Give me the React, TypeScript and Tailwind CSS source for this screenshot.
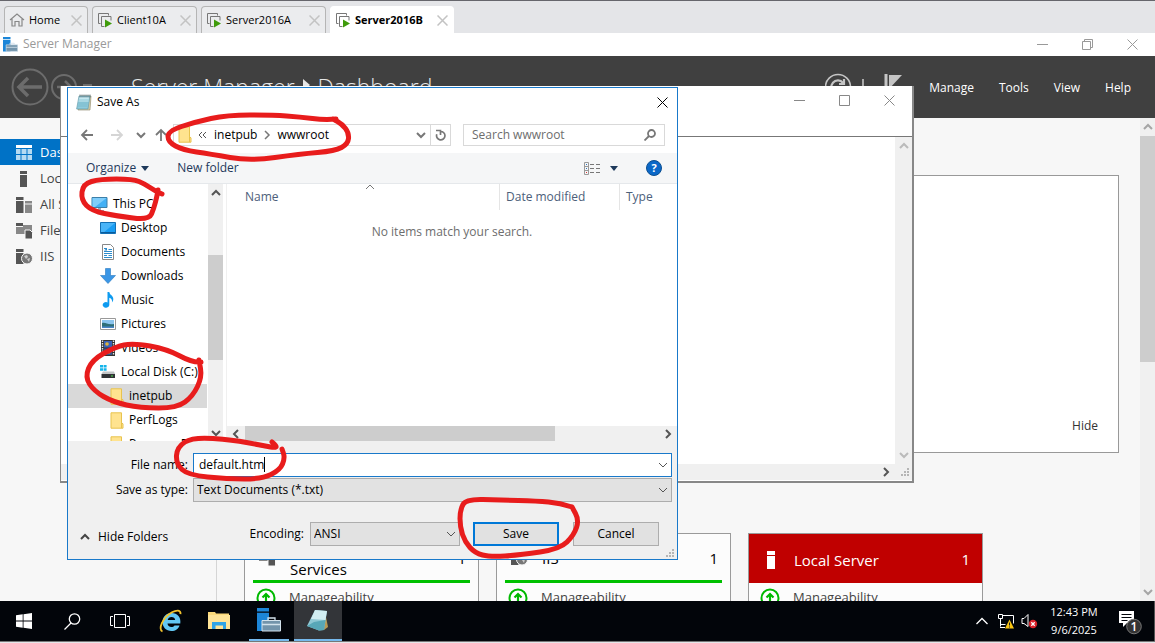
import type { ReactNode } from "react";

type Pt = [number, number];

function smooth(points: Pt[]): string {
  let d = `M${points[0][0]} ${points[0][1]}`;
  for (let i = 1; i < points.length - 1; i++) {
    const [x, y] = points[i];
    const [nx, ny] = points[i + 1];
    d += ` Q${x} ${y} ${(x + nx) / 2} ${(y + ny) / 2}`;
  }
  const last = points[points.length - 1];
  return `${d} L${last[0]} ${last[1]}`;
}

const marks: Pt[][] = [
  [[336, 119], [325, 120], [300, 117], [273, 115], [227, 115], [195, 122], [168, 131], [168, 142], [183, 150], [210, 154], [250, 161], [300, 154], [335, 151], [348, 144], [349, 133], [342, 124], [333, 119]],
  [[162, 194], [155, 191], [145, 184], [133, 179], [100, 179], [83, 184], [81, 200], [92, 211], [117, 216], [149, 220], [154, 208], [157, 196], [158, 190]],
  [[201, 362], [193, 363], [167, 349], [133, 343], [115, 347], [92, 360], [85, 377], [94, 391], [113, 402], [140, 408], [177, 408], [193, 396], [202, 377], [199, 360]],
  [[272, 442], [281, 449], [260, 445], [233, 440], [193, 437], [177, 447], [176, 464], [188, 475], [227, 479], [262, 479], [280, 470], [285, 458], [282, 449]],
  [[572, 507], [560, 503], [537, 501], [500, 500], [466, 499], [460, 510], [460, 527], [465, 542], [475, 553], [490, 557], [520, 555], [560, 549], [574, 535], [579, 520], [572, 507]],
];

function Chevron({ dir = "down", className = "" }: { dir?: "up" | "down" | "left" | "right"; className?: string }) {
  const d = {
    down: "M1 3l4 4 4-4",
    up: "M1 7l4-4 4 4",
    left: "M7 1L3 5l4 4",
    right: "M3 1l4 4-4 4",
  }[dir];
  return (
    <svg viewBox="0 0 10 10" className={`size-[10px] shrink-0 ${className}`} fill="none" stroke="currentColor">
      <path d={d} />
    </svg>
  );
}

function Close({ className = "" }: { className?: string }) {
  return (
    <svg viewBox="0 0 11 11" className={`size-[11px] ${className}`} fill="none" stroke="currentColor">
      <path d="M.5.5l10 10M10.5.5l-10 10" />
    </svg>
  );
}

function VmIcon() {
  return (
    <svg viewBox="0 0 16 16" className="size-4 shrink-0">
      <path d="M3.500 11.500H1.500V1.500h10v2" fill="none" stroke="#777" />
      <path d="M7.500 14.500h-3v-10h9.500v4" fill="none" stroke="#777" />
      <path d="M8 7.500l7 4-7 4z" fill="#3f9b0b" />
    </svg>
  );
}

function NotepadIcon() {
  return (
    <svg viewBox="0 0 16 17" className="h-[17px] w-4 shrink-0">
      <path d="M4 2h11l-1 14H2z" fill="#d8cfa8" stroke="#8c8468" strokeWidth=".6" />
      <path d="M3 2h11l-2 13H.6z" fill="#8fcbdc" stroke="#5c93a3" strokeWidth=".6" />
      <path d="M3.500 3h9.500l-.7 5H2.500z" fill="#c3e8f1" />
      <path d="M3 6h9.500M2.600 8h9.500M2.300 10h9.500M2 12h9.500" stroke="#6fb1c4" strokeWidth=".6" />
      <path d="M4 .5v3M6 .5v3M8 .5v3M10 .5v3M12 .5v3M14 .5v3" stroke="#5a6c72" strokeWidth=".8" />
    </svg>
  );
}

function FolderIcon() {
  return (
    <svg viewBox="0 0 14 17" className="h-[17px] w-[14px] shrink-0">
      <path d="M1 .8h10.500v10l1.500 1v4.400H1z" fill="#ffe38f" stroke="#e8c34e" />
      <path d="M11.500 10.500v5.500" stroke="#e8c34e" />
    </svg>
  );
}

function ServerToolsIcon({ className = "" }: { className?: string }) {
  return (
    <svg viewBox="0 0 24 24" className={className}>
      <path d="M0 0h12v3.500H0zM0 4.800h12V23H0z" fill="#1c86d8" />
      <path d="M5 12.500h18.500V23H5z" fill="#7394ab" stroke="#d3e2ec" strokeWidth="1" />
      <path d="M11 12v-2h7v2M5 16.500h18" fill="none" stroke="#d3e2ec" strokeWidth="1.300" />
    </svg>
  );
}

function Pc() {
  return (
    <svg viewBox="0 0 17 16" className="h-4 w-[17px]">
      <path d="M1 1.500h15v10H1z" fill="#43b0f5" stroke="#3c7fa8" />
      <path d="M1.500 2h14L4 11H1.500z" fill="#7fcdfb" />
      <path d="M7 12h3v2H7zM4 14h9v1H4z" fill="#9ab" />
    </svg>
  );
}
function DesktopIcon() {
  return (
    <svg viewBox="0 0 16 16" className="size-4">
      <path d="M.5 2.500h15v11H.5z" fill="#1a9df3" stroke="#1470b4" />
      <path d="M1 3h14L3 13H1z" fill="#4ab5f8" />
      <path d="M1 12h14v1H1z" fill="#0b5c9c" />
    </svg>
  );
}
function DocumentIcon() {
  return (
    <svg viewBox="0 0 16 16" className="size-4">
      <path d="M2.500.5h8l3 3v12h-11z" fill="#fff" stroke="#888" />
      <path d="M4 4.500h3M8.500 5.500h3.500M4 7.500h8M4 9.500h8M4 11.500h3M8.500 11.500h3.500M4 13.500h8" stroke="#2d8ccc" />
      <path d="M4 6.500h3V4z" fill="#2d8ccc" />
    </svg>
  );
}
function DownloadIcon() {
  return (
    <svg viewBox="0 0 16 16" className="size-4">
      <path d="M5.500.5h5v7h5L8 15.500.5 7.500h5z" fill="#3a96e6" stroke="#2878c0" strokeWidth=".6" />
    </svg>
  );
}
function MusicIcon() {
  return (
    <svg viewBox="0 0 16 16" className="size-4">
      <path d="M7.500 0h1.800c.4 3 4 3.600 4 7 0 1.600-.6 2.600-1.400 3.400.6-2.600-.6-4-2.600-4.600V13a3.300 2.800 0 1 1-1.800-2.600z" fill="#0e9bf0" />
    </svg>
  );
}
function PictureIcon() {
  return (
    <svg viewBox="0 0 16 16" className="size-4">
      <path d="M.5 2.500h15v11H.5z" fill="#fff" stroke="#999" />
      <path d="M2 4h12v8H2z" fill="#8cc5ee" />
      <path d="M2 7c4-1 5 2 12 1v4H2z" fill="#2f6f78" />
      <path d="M2 10.500h12V12H2z" fill="#4a86c8" />
    </svg>
  );
}
function VideoIcon() {
  return (
    <svg viewBox="0 0 16 16" className="size-4">
      <path d="M1 0h14v16H1z" fill="#333" />
      <path d="M2.500.5v15M13.500.5v15" stroke="#e8e8e8" strokeWidth="1.400" strokeDasharray="1.500 1" />
      <path d="M4 1h8v6.500H4z" fill="#3a63b8" />
      <path d="M4 8.500h8V15H4z" fill="#36538d" />
      <circle cx="7" cy="4" r="1.800" fill="#e0b53c" />
      <circle cx="9" cy="12" r="1.800" fill="#c98a2c" />
    </svg>
  );
}
function DiskIcon() {
  return (
    <svg viewBox="0 0 16 16" className="size-4">
      <path d="M0 1h3v2.500H0zM3.600 1h3v2.500h-3zM0 4.200h3v2.500H0zM3.600 4.200h3v2.500h-3z" fill="#14b4ea" />
      <path d="M3 7.500h11l1 2.500H1.500z" fill="#c2c5c7" />
      <path d="M1.500 10H15v4H1.500z" fill="#303336" />
      <path d="M11 11.500h2v1h-2z" fill="#4ce04c" />
    </svg>
  );
}

function Tab({ label, icon, active = false, width }: { label: string; icon: ReactNode; active?: boolean; width: string }) {
  return (
    <div className={`flex h-[27px] items-center rounded-t border border-b-0 pr-[5px] pl-1 ${width} ${active ? "border-white bg-white font-bold" : "border-[#b5b5b5] bg-[#ebecee]"}`}>
      <button className="flex min-w-0 flex-1 items-center gap-1 text-left whitespace-nowrap">
        {icon}
        <span className="text-[11px]">{label}</span>
      </button>
      <button aria-label={`Close ${label}`} className="text-[#c3c3c3]">
        <Close className="size-[10px] stroke-[1.5]" />
      </button>
    </div>
  );
}

function SideIcon({ kind }: { kind: "dash" | "server" | "servers" | "files" | "iis" }) {
  return (
    <svg viewBox="0 0 17 18" className="h-[18px] w-[17px] shrink-0">
      {kind === "dash" && (
        <>
          <path d="M0 1h16v3H0z" fill="#fff" />
          <path d="M0 5h4.500v5H0zM5.500 5h5v5h-5zM11.500 5H16v5h-4.500zM0 11h4.500v5H0zM5.500 11h5v5h-5zM11.500 11H16v5h-4.500z" fill="#b5daf2" />
        </>
      )}
      {kind === "server" && <path d="M4 1h7v3H4zM4 5h7v12H4z" fill="#555" />}
      {kind === "servers" && (
        <>
          <path d="M0 1h7.500v3H0zM0 5h7.500v12H0z" fill="#555" />
          <path d="M9 5h7v2.500H9zM9 8.500h7V17H9z" fill="#888" />
        </>
      )}
      {kind === "files" && (
        <>
          <path d="M0 1h7v3H0z" fill="#555" />
          <path d="M0 5h7V3h9v9H0z" fill="#888" />
          <path d="M9 8h5l2.500 2.500V17H9z" fill="#555" stroke="#f7f7f7" />
        </>
      )}
      {kind === "iis" && (
        <>
          <path d="M0 1h7.500v3H0zM0 5h7.500v11H0z" fill="#555" />
          <circle cx="11" cy="10.500" r="5.500" fill="#777" stroke="#f7f7f7" />
          <path d="M8 8l3-1 1 2-2 2zM11 11l3-1-1 4z" fill="#ccc" />
        </>
      )}
    </svg>
  );
}

const sideItems: { label: string; kind: "dash" | "server" | "servers" | "files" | "iis" }[] = [
  { label: "Dashboard", kind: "dash" },
  { label: "Local Server", kind: "server" },
  { label: "All Servers", kind: "servers" },
  { label: "File and Storage Services", kind: "files" },
  { label: "IIS", kind: "iis" },
];

function Tile({ title, icon, alert = false }: { title: string; icon: ReactNode; alert?: boolean }) {
  return (
    <section className="h-[120px] w-[235px] shrink-0 border border-[#9a9a9a] bg-[#fcfcfc]">
      <header className={`flex items-center pt-[2px] text-[15px] ${alert ? "h-[49px] bg-[#c00000] text-white" : "mx-2 h-[49px] border-b-[3px] border-[#00c000]"}`}>
        <span className={`flex justify-center ${alert ? "ml-2 w-7" : "w-7"}`}>{icon}</span>
        <h3 className="ml-[9px] w-[132px] leading-[22px]">{title}</h3>
        <span className={`ml-auto ${alert ? "pr-3" : "pr-1"}`}>1</span>
      </header>
      <div className="mx-2 flex items-center gap-[13px] pt-[5px] text-[13px] text-[#444]">
        <svg viewBox="0 0 20 20" className="ml-[3px] size-5">
          <circle cx="10" cy="10" r="8.500" fill="#fff" stroke="#00b900" strokeWidth="2" />
          <path d="M10 15V6M6.500 9.500L10 6l3.500 3.500" fill="none" stroke="#00b900" strokeWidth="2.200" />
        </svg>
        Manageability
      </div>
    </section>
  );
}

const tree: { label: string; icon: ReactNode; pad: string; selected?: boolean }[] = [
  { label: "This PC", icon: <Pc />, pad: "pl-[23px]" },
  { label: "Desktop", icon: <DesktopIcon />, pad: "pl-8" },
  { label: "Documents", icon: <DocumentIcon />, pad: "pl-8" },
  { label: "Downloads", icon: <DownloadIcon />, pad: "pl-8" },
  { label: "Music", icon: <MusicIcon />, pad: "pl-8" },
  { label: "Pictures", icon: <PictureIcon />, pad: "pl-8" },
  { label: "Videos", icon: <VideoIcon />, pad: "pl-8" },
  { label: "Local Disk (C:)", icon: <DiskIcon />, pad: "pl-8" },
  { label: "inetpub", icon: <FolderIcon />, pad: "pl-[42px]", selected: true },
  { label: "PerfLogs", icon: <FolderIcon />, pad: "pl-[42px]" },
  { label: "Program Files", icon: <FolderIcon />, pad: "pl-[42px]" },
];

function Grip() {
  return (
    <svg viewBox="0 0 9 9" className="size-[9px]" fill="#b5b5b5">
      <path d="M6 0h2v2H6zM3 3h2v2H3zM6 3h2v2H6zM0 6h2v2H0zM3 6h2v2H3zM6 6h2v2H6z" />
    </svg>
  );
}

function SaveAsDialog() {
  return (
    <div role="dialog" aria-label="Save As" className="absolute top-[87px] left-[67px] flex h-[473px] w-[611px] flex-col border border-[#1979ca] bg-white text-xs text-black">
      <header className="flex h-7 items-center gap-[5px] pr-[9px] pl-2">
        <NotepadIcon />
        <span className="flex-1">Save As</span>
        <button aria-label="Close"><Close /></button>
      </header>
      <div className="flex h-[37px] items-center pr-3 pl-3 text-[#777]">
        <button aria-label="Back" className="w-[30px]">
          <svg viewBox="0 0 14 12" className="h-3 w-[14px]" fill="none" stroke="currentColor" strokeWidth="1.800"><path d="M13 6H2M7 1L2 6l5 5" /></svg>
        </button>
        <button aria-label="Forward" className="w-[25px] text-[#d5d5d5]">
          <svg viewBox="0 0 14 12" className="h-3 w-[14px]" fill="none" stroke="currentColor" strokeWidth="1.800"><path d="M1 6h11M7 1l5 5-5 5" /></svg>
        </button>
        <button aria-label="Recent locations" className="w-5">
          <Chevron className="ml-px size-[7px] stroke-2" />
        </button>
        <button aria-label="Up" className="w-[18px]">
          <svg viewBox="0 0 12 13" className="h-[13px] w-3" fill="none" stroke="currentColor" strokeWidth="1.800"><path d="M6 13V2M1 7l5-5 5 5" /></svg>
        </button>
        <div className="flex h-[22px] w-[278px] items-center border border-[#d9d9d9] pl-1">
          <FolderIcon />
          <svg viewBox="0 0 9 8" className="ml-[6px] h-2 w-[9px]" fill="none" stroke="#555"><path d="M4 1L1 4l3 3M8 1L5 4l3 3" /></svg>
          <button className="ml-[7px] text-black">inetpub</button>
          <Chevron dir="right" className="mx-[5px] size-2 stroke-[1.5]" />
          <button className="text-black">wwwroot</button>
          <button aria-label="Previous locations" className="ml-auto pr-1"><Chevron className="stroke-2" /></button>
          <button aria-label="Refresh" className="flex h-full w-5 items-center justify-center border-l border-[#d9d9d9]">
            <svg viewBox="0 0 12 12" className="size-3" fill="none" stroke="currentColor" strokeWidth="1.700"><path d="M1 1.500h4.500V6M5.500 2.500a4.200 4.200 0 1 1-3.700 2.800" transform="translate(0 0)" /></svg>
          </button>
        </div>
        <div className="ml-3 flex h-[22px] flex-1 items-center border border-[#d9d9d9] px-2">
          <input aria-label="Search wwwroot" placeholder="Search wwwroot" className="min-w-0 flex-1 outline-none placeholder:text-[#6d6d6d]" />
          <svg viewBox="0 0 12 12" className="size-3" fill="none" stroke="currentColor" strokeWidth="1.800"><circle cx="7.500" cy="4.500" r="3.500" /><path d="M5 7l-4.500 4.500" /></svg>
        </div>
      </div>
      <div className="flex h-[31px] items-center border-b border-[#e5e8eb] bg-[#f5f6f7] pr-[15px] pl-[18px] text-[#1e395b]">
        <button className="flex items-center gap-[5px]">
          Organize
          <svg viewBox="0 0 8 5" className="h-[5px] w-2" fill="currentColor"><path d="M0 0h8L4 5z" /></svg>
        </button>
        <button className="ml-7">New folder</button>
        <button aria-label="Change your view" className="ml-auto flex items-center gap-[9px]">
          <svg viewBox="0 0 17 13" className="h-[13px] w-[17px]" fill="none">
            <path d="M.5.5h4v12h-4zM.5 4.500h4M.5 8.500h4" stroke="#999" />
            <path d="M2 2.500h1M2 6.500h1" stroke="#3279c0" /><path d="M2 10.500h1" stroke="#d33" />
            <path d="M6 2.500h4M12 2.500h4M6 6.500h4M12 6.500h4M6 10.500h4M12 10.500h4" stroke="#777" />
          </svg>
          <svg viewBox="0 0 8 5" className="h-[5px] w-2" fill="currentColor"><path d="M0 0h8L4 5z" /></svg>
        </button>
        <button aria-label="Help" className="ml-7 flex size-4 items-center justify-center rounded-full border border-[#0c4f91] bg-[#0b68c8] text-[11px] font-bold text-white">?</button>
      </div>
      <div className="flex h-[257px]">
        <ul className="w-[139px] overflow-hidden pt-2">
          {tree.map((t) => (
            <li key={t.label} className={`flex h-6 items-center gap-[5px] whitespace-nowrap ${t.pad} ${t.selected ? "bg-[#d9d9d9]" : ""}`}>
              {t.icon}
              <span>{t.label}</span>
            </li>
          ))}
        </ul>
        <div className="ml-px flex w-[15px] flex-col items-center bg-[#f0f0f0] text-[#555]">
          <Chevron dir="up" className="mt-1 stroke-2" />
          <div className="mt-[57px] h-[105px] w-full bg-[#cdcdcd]" />
          <Chevron className="mt-auto mb-[3px] stroke-2" />
        </div>
        <div className="ml-[3px] flex flex-1 flex-col border-l border-[#f0f0f0]">
          <div className="flex h-[26px] items-center text-[#4c607a]">
            <span className="flex h-full w-[273px] items-center border-r border-[#e5e5e5] pl-[18px]">
              Name
              <Chevron dir="up" className="mb-5 ml-[86px] text-[#777]" />
            </span>
            <span className="flex h-full w-[120px] items-center border-r border-[#e5e5e5] pl-[6px]">Date modified</span>
            <span className="pl-[6px]">Type</span>
          </div>
          <p className="mt-[14px] text-center text-[#6d6d6d]">No items match your search.</p>
          <div className="mt-auto flex h-[15px] items-center bg-[#f0f0f0] pr-1 pl-1 text-[#555]">
            <Chevron dir="left" className="stroke-2" />
            <div className="ml-1 h-full w-[310px] bg-[#cdcdcd]" />
            <Chevron dir="right" className="ml-auto stroke-2" />
          </div>
        </div>
      </div>
      <div className="relative flex flex-1 flex-col bg-[#f0f0f0] pr-[5px]">
        <div className="mt-3 flex items-center">
          <label htmlFor="file-name" className="w-[120px] text-right">File name:</label>
          <div className="relative ml-[5px] flex-1">
            <input id="file-name" defaultValue="default.htm" className="block h-6 w-full border border-[#1979ca] bg-white pb-px pl-[5px] outline-none" />
            <span className="absolute top-1 left-[71px] h-[15px] w-px bg-black" />
            <Chevron className="absolute top-[7px] right-1 text-[#555]" />
          </div>
        </div>
        <div className="mt-px flex items-center">
          <label htmlFor="file-type" className="w-[120px] text-right">Save as type:</label>
          <div className="relative ml-[5px] flex-1">
            <select id="file-type" className="block h-6 w-full appearance-none border border-[#adadad] bg-[#e2e2e2] pl-[3px] outline-none">
              <option>Text Documents (*.txt)</option>
            </select>
            <Chevron className="pointer-events-none absolute top-[7px] right-1 text-[#555]" />
          </div>
        </div>
        <div className="mt-5 flex items-center">
          <button className="ml-3 flex items-center gap-2 pt-[6px]">
            <Chevron dir="up" className="stroke-2 text-[#444]" />
            Hide Folders
          </button>
          <label htmlFor="encoding" className="ml-auto">Encoding:</label>
          <div className="relative ml-[6px] w-[150px]">
            <select id="encoding" className="block h-6 w-full appearance-none border border-[#adadad] bg-[#e2e2e2] pl-[3px] outline-none">
              <option>ANSI</option>
            </select>
            <Chevron className="pointer-events-none absolute top-[7px] right-1 text-[#555]" />
          </div>
          <button className="ml-[13px] h-6 w-[86px] border-2 border-[#0078d7] bg-[#e1e1e1]">Save</button>
          <button className="mr-[13px] ml-[14px] h-6 w-[86px] border border-[#adadad] bg-[#e1e1e1]">Cancel</button>
        </div>
        <div className="absolute right-[2px] bottom-px"><Grip /></div>
      </div>
    </div>
  );
}

function NotepadWindow() {
  return (
    <div className="absolute top-[86px] left-[60px] flex h-[397px] w-[854px] flex-col border-r-2 border-b-2 border-l border-[#888] bg-white text-[#888]">
      <header className="flex h-7 items-center justify-end gap-[34px] pr-[17px]">
        <button aria-label="Minimize"><svg viewBox="0 0 11 11" className="size-[11px]" stroke="currentColor"><path d="M0 5.500h11" /></svg></button>
        <button aria-label="Maximize"><svg viewBox="0 0 11 11" className="size-[11px]" fill="none" stroke="currentColor"><path d="M.5.5h10v10H.5z" /></svg></button>
        <button aria-label="Close"><Close /></button>
      </header>
      <div className="h-[23px] border-b border-[#777]" />
      <div className="flex flex-1">
        <textarea aria-label="Document text" className="flex-1 resize-none bg-white outline-none" />
        <div className="flex w-[17px] flex-col items-center justify-between bg-[#f0f0f0] py-1 text-[#bbb]">
          <Chevron dir="up" className="stroke-2" />
          <Chevron className="stroke-2" />
        </div>
      </div>
      <div className="mb-px flex h-4 items-center justify-end gap-[10px] bg-[#f0f0f0] pr-[2px] text-[#555]">
        <Chevron dir="right" className="stroke-2" />
        <Grip />
      </div>
    </div>
  );
}

function Taskbar() {
  return (
    <footer className="z-10 flex h-10 items-stretch bg-[#02050a] text-xs text-white">
      <button aria-label="Start" className="flex w-12 items-center justify-center">
        <svg viewBox="0 0 16 16" className="size-4" fill="#fff"><path d="M0 2.300L6.700 1.300v6.300H0zM7.500 1.200L16 0v7.600H7.500zM0 8.400h6.700v6.300L0 13.700zM7.500 8.400H16V16l-8.500-1.200z" /></svg>
      </button>
      <button aria-label="Search" className="flex w-12 items-center justify-center">
        <svg viewBox="0 0 17 17" className="size-[17px]" fill="none" stroke="#fff" strokeWidth="1.300"><circle cx="10.500" cy="6" r="5.200" /><path d="M7 10L.5 16.500" /></svg>
      </button>
      <button aria-label="Task view" className="flex w-12 items-center justify-center">
        <svg viewBox="0 0 20 14" className="h-[14px] w-5" fill="none" stroke="#fff"><path d="M4.500.5h11v13h-11zM3 2.500H.5v9H3M17 2.500h2.500v9H17" /></svg>
      </button>
      <button aria-label="Internet Explorer" className="ml-[3px] flex w-12 items-center justify-center">
        <svg viewBox="0 0 24 24" className="size-6" fill="none">
          <path d="M12.500 4C7 4 3.500 8 3.500 13s3.500 9 9 9c4 0 7-2 8-5.500h-5c-.8 1.200-1.800 1.500-3 1.500-2.300 0-3.800-1.300-4-3.500h12.800C22.300 8.500 18.500 4 12.500 4zm0 4c2 0 3.500 1.100 3.700 3H8.700c.4-1.900 1.800-3 3.800-3z" fill="#63c8f4" fillRule="evenodd" />
          <path d="M3.500 22.500C-1.500 20.500 4 8 13 3.200c4.500-2.400 9-2.600 8.500 2" stroke="#f3c32c" strokeWidth="1.800" />
        </svg>
      </button>
      <button aria-label="File Explorer" className="flex w-12 items-center justify-center">
        <svg viewBox="0 0 22 20" className="h-5 w-[22px]"><path d="M0 1h7l1 1.500h13V18H0z" fill="#fbd97a" /><path d="M0 4h22v14H0z" fill="#ffe497" /><path d="M4 18v-7h14v7h-3v-3.500H7.500V18z" fill="#2fa4e6" /></svg>
      </button>
      <button aria-label="Server Manager" className="ml-[6px] flex w-10 items-center justify-center border-b-2 border-[#76b9ed]">
        <ServerToolsIcon className="size-6" />
      </button>
      <button aria-label="Notepad" className="ml-[5px] flex w-12 items-center justify-center border-b-2 border-[#76b9ed] bg-[#333539]">
        <svg viewBox="0 0 24 24" className="size-6"><path d="M19 4l3 15-4 3z" fill="#b99a55" /><path d="M9 2l12 1-3 19-5 .5L1 18z" fill="#8ec7d3" /><path d="M9 2l12 1-1.500 9L5 11z" fill="#d2eef2" /><path d="M1 18l12 4.500 5-.5 1.500-10L8 14z" fill="#58a7b7" /></svg>
      </button>
      <div className="ml-auto flex items-center">
        <button aria-label="Show hidden icons"><svg viewBox="0 0 12 8" className="h-2 w-3" fill="none" stroke="#fff" strokeWidth="1.300"><path d="M.5 7L6 1.500 11.500 7" /></svg></button>
        <svg viewBox="0 0 17 17" className="ml-[10px] size-[17px]" fill="none" stroke="#fff"><path d="M5 2.500h10.500v8M.5 1.500h4v4h-4zM2.500 5.500v8M2.500 11.500h5M2 14.500h5" /><path d="M11.500 6.500l4.500 9H7z" fill="#f7c313" stroke="none" /><path d="M11.500 9.500v3M11.500 13.500v1" stroke="#222" /></svg>
        <svg viewBox="0 0 17 16" className="ml-[6px] h-4 w-[17px]" fill="none" stroke="#fff"><path d="M1 5.500h2l4-4v12l-4-3H1z" /><circle cx="12" cy="11" r="4.200" fill="#d8222a" stroke="none" /><path d="M10.300 9.300l3.400 3.400M13.700 9.300l-3.400 3.400" strokeWidth="1.300" /></svg>
        <div className="ml-[6px] w-[60px] text-center text-[11px] leading-[18px] whitespace-nowrap"><div>12:43 PM</div><div>9/6/2025</div></div>
        <button aria-label="Notifications" className="mr-3 ml-[14px] pt-1">
          <svg viewBox="0 0 24 26" className="h-[26px] w-6"><path d="M1 1h15v12H9l-4 4v-4H1z" fill="#fff" /><path d="M3.500 4.500h10M3.500 7.500h10M3.500 10.500h6" stroke="#02050a" /><circle cx="16" cy="16.500" r="7.300" fill="#333" stroke="#777" /><text x="16" y="21" fill="#fff" fontSize="12" fontWeight="600" textAnchor="middle">1</text></svg>
        </button>
        <div className="h-full w-px bg-[#555]" />
      </div>
    </footer>
  );
}

export default function App() {
  return (
    <div className="relative flex h-screen flex-col overflow-hidden bg-white font-['Open_Sans',sans-serif] text-black">
      <nav aria-label="Machines" className="flex h-[33px] shrink-0 items-end gap-1 border-t border-[#66666c] bg-[#e4e5e8] pl-1">
        <Tab width="w-[84px]" label="Home" icon={<svg viewBox="0 0 16 16" className="size-4" fill="none" stroke="#888" strokeWidth="1.200"><path d="M1 8l7-6 7 6M3 7v7h3V9.500h4V14h3V7" /></svg>} />
        <Tab width="w-[105px]" label="Client10A" icon={<VmIcon />} />
        <Tab width="w-[125px]" label="Server2016A" icon={<VmIcon />} />
        <Tab width="w-[124px]" label="Server2016B" icon={<VmIcon />} active />
      </nav>
      <header className="flex h-[23px] shrink-0 items-center bg-white pr-[17px] pb-px pl-[3px] text-xs text-[#999]">
        <ServerToolsIcon className="size-[15px]" />
        <span className="ml-[5px] flex-1">Server Manager</span>
        <div className="flex items-center gap-[34px]">
          <button aria-label="Minimize"><svg viewBox="0 0 11 11" className="size-[11px]" stroke="currentColor"><path d="M0 5.500h11" /></svg></button>
          <button aria-label="Restore"><svg viewBox="0 0 11 11" className="size-[11px]" fill="none" stroke="currentColor"><path d="M.5 2.500h8v8h-8zM2.500 2.500v-2h8v8h-2" /></svg></button>
          <button aria-label="Close"><Close /></button>
        </div>
      </header>
      <header className="flex h-[62px] shrink-0 items-center bg-[#404040] pr-6 pl-[11px] text-white">
        <svg viewBox="0 0 84 38" className="h-[38px] w-[84px]" fill="none" stroke="#6c6c6c" strokeWidth="2"><circle cx="19" cy="19" r="17.500" /><path d="M31 19H9M17 10l-9 9 9 9" strokeWidth="3.500" /><circle cx="53" cy="19" r="12" /><path d="M46 19h13M54 13l6 6-6 6" strokeWidth="2.500" /><path d="M72 17h9" /></svg>
        <h1 className="ml-9 flex items-center text-[23px] font-light whitespace-nowrap text-[#e6e6e6]">
          Server Manager
          <svg viewBox="0 0 7 12" className="mx-2 mb-1 h-3 w-[7px]" fill="currentColor"><path d="M0 0l7 6-7 6z" /></svg>
          Dashboard
        </h1>
        <div className="ml-auto flex items-center">
          <svg viewBox="0 0 78 32" className="mr-[26px] h-8 w-[78px]" fill="none" stroke="#c5c5c5" strokeWidth="1.600"><circle cx="13" cy="16" r="12.500" /><path d="M18 12a6.500 6.500 0 1 0 1 6M19 8v5h-5" strokeWidth="2.200" /><path d="M38 8v18" /><path d="M61 3v26" strokeWidth="3" /><path d="M64 4h13L64 18z" fill="#c5c5c5" stroke="none" /></svg>
          <div className="flex gap-[25px] pt-[2px] text-xs font-medium">
            <button>Manage</button><button>Tools</button><button>View</button><button>Help</button>
          </div>
        </div>
      </header>
      <div className="flex min-h-0 flex-1 overflow-hidden bg-[#f7f7f7]">
        <nav aria-label="Server Manager" className="w-[217px] shrink-0 border-r border-[#d5d5d5] pt-[21px] text-[13px] text-[#444]">
          {sideItems.map((s) => (
            <a key={s.kind} href="#" className={`flex h-[26px] items-center gap-[7px] pt-[2px] pl-4 whitespace-nowrap ${s.kind === "dash" ? "bg-[#0072c6] text-white" : ""}`}>
              <SideIcon kind={s.kind} />{s.label}
            </a>
          ))}
        </nav>
        <main className="min-w-0 flex-1 pt-[57px] pl-[27px]">
          <section className="mr-[21px] flex h-[278px] items-end justify-end border border-[#999] bg-white pr-5 pb-[18px] text-xs text-[#333]"><button>Hide</button></section>
          <div className="mt-20 flex gap-[17px]">
            <Tile title="File and Storage Services" icon={<SideIcon kind="files" />} />
            <Tile title="IIS" icon={<SideIcon kind="iis" />} />
            <Tile alert title="Local Server" icon={<svg viewBox="0 0 8 18" className="h-[18px] w-2" fill="#fff"><path d="M0 0h8v4H0zM0 5h8v13H0z" /></svg>} />
          </div>
        </main>
        <div className="flex w-[15px] shrink-0 flex-col items-center bg-[#f0f0f0] py-1 text-[#a5a5a5]">
          <Chevron dir="up" className="stroke-2" />
          <div className="mt-1 h-[226px] w-full bg-[#cdcdcd]" />
          <Chevron className="mt-auto stroke-2" />
        </div>
      </div>
      <Taskbar />
      <div className="h-[2px] shrink-0 border-t border-[#777] bg-[#e4e5e8]" />
      <NotepadWindow />
      <SaveAsDialog />
      <svg aria-hidden="true" className="pointer-events-none absolute inset-0 z-20 size-full" fill="none" stroke="#e81c1c" strokeWidth="5" strokeLinecap="round" strokeLinejoin="round">
        {marks.map((m, i) => <path key={i} d={smooth(m)} />)}
      </svg>
    </div>
  );
}
